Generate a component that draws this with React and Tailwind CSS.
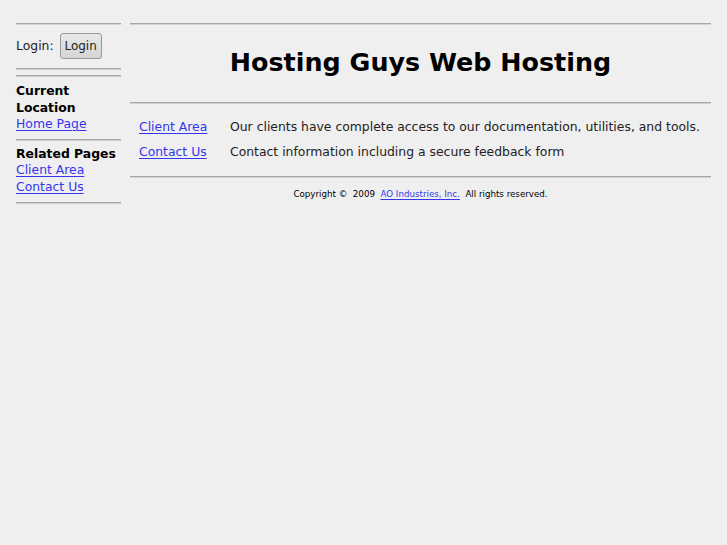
const font = { fontFamily: '"DejaVu Sans", Verdana, sans-serif' };

function Rule({ className = '' }) {
  return <div className={`h-[2px] border-t border-t-[#a6a6a6] border-b border-b-[#d2d2d2] ${className}`} />;
}

function Link({ children }) {
  return (
    <a href="#" className="text-[#3535ef] underline underline-offset-[2px]">
      {children}
    </a>
  );
}

const links = [
  { name: 'Client Area', text: 'Our clients have complete access to our documentation, utilities, and tools.' },
  { name: 'Contact Us', text: 'Contact information including a secure feedback form' },
];

export default function App() {
  return (
    <div
      className="min-h-[545px] w-full bg-[#efefef] text-[#222] text-[12.4px] leading-[16.5px]"
      style={font}
    >
      <div className="flex gap-[9px] px-4 pt-[23px]">
        {/* Sidebar */}
        <div className="w-[105px] shrink-0">
          <Rule />
          <div className="mt-[8px] flex items-center gap-[6px]">
            <span>Login:</span>
            <button className="h-[26px] w-[42px] rounded-[3px] border border-[#9a9a9a] bg-gradient-to-b from-[#e8e8e8] to-[#d6d6d6] text-[12px] text-[#222]">
              Login
            </button>
          </div>
          <Rule className="mt-[9px]" />
          <Rule className="mt-[5px]" />
          <div className="mt-[6px] flex flex-col">
            <span className="font-bold text-black">Current Location</span>
            <Link>Home Page</Link>
          </div>
          <Rule className="mt-[6px]" />
          <div className="mt-[5px] flex flex-col items-start">
            <span className="font-bold text-black">Related Pages</span>
            <Link>Client Area</Link>
            <Link>Contact Us</Link>
          </div>
          <Rule className="mt-[7px]" />
        </div>

        {/* Main */}
        <div className="flex-1">
          <Rule />
          <div className="h-[77px] pt-[22px] text-center">
            <h1 className="text-[25.4px] leading-[30px] font-bold text-black">Hosting Guys Web Hosting</h1>
          </div>
          <Rule />
          <div className="flex flex-col gap-[9px] pl-[9px] pt-[15px] leading-4">
            {links.map((l) => (
              <div key={l.name} className="flex">
                <div className="w-[91px] shrink-0">
                  <Link>{l.name}</Link>
                </div>
                <div>{l.text}</div>
              </div>
            ))}
          </div>
          <Rule className="mt-[16px]" />
          <div className="pt-[10px] text-center text-[8.7px] leading-[12px] text-black">
            Copyright ©&nbsp; 2009&nbsp; <Link>AO Industries, Inc.</Link>&nbsp; All rights reserved.
          </div>
        </div>
      </div>
    </div>
  );
}
